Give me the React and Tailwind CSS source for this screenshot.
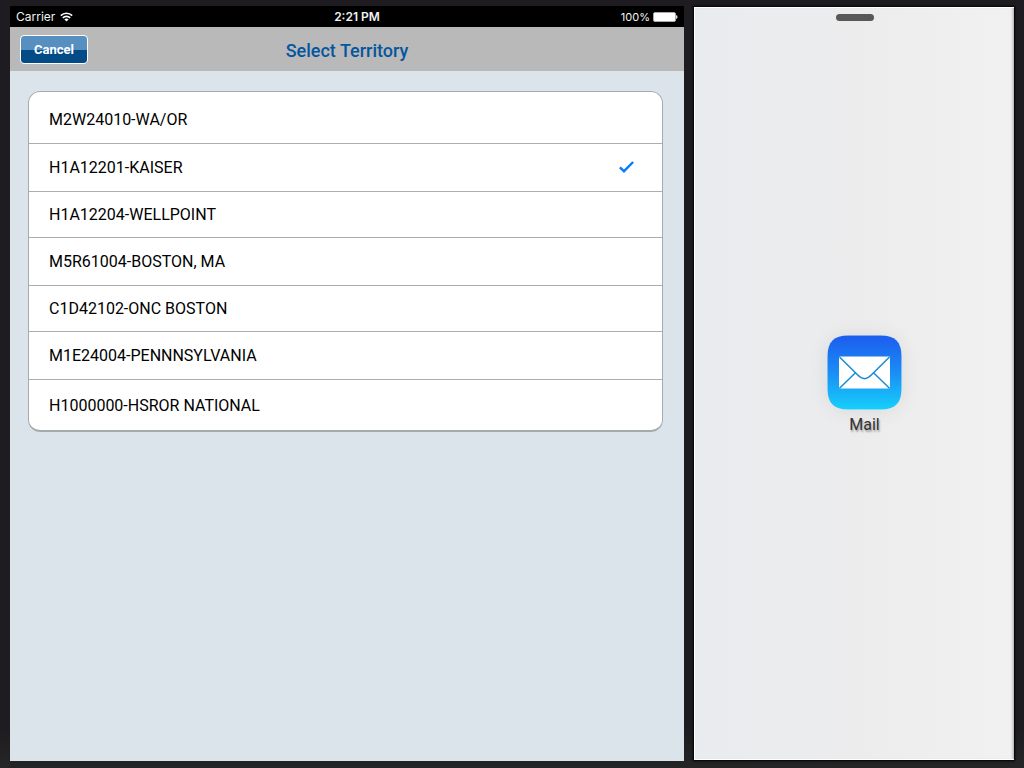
import { useState } from "react";

const territories = [
  { name: "M2W24010-WA/OR", row: "h-[52px] pt-[4px]" },
  { name: "H1A12201-KAISER", row: "h-[48px] pt-px" },
  { name: "H1A12204-WELLPOINT", row: "h-[46px] pt-px" },
  { name: "M5R61004-BOSTON, MA", row: "h-[48px] pt-px" },
  { name: "C1D42102-ONC BOSTON", row: "h-[46px] pt-px" },
  { name: "M1E24004-PENNNSYLVANIA", row: "h-[48px] pt-px" },
  { name: "H1000000-HSROR NATIONAL", row: "h-[50px] pt-px" },
];

function StatusBar() {
  return (
    <div className="grid h-[21px] grid-cols-3 items-center bg-black px-[6px] font-['Inter',sans-serif] text-[12px] leading-[14px] text-[#f2f2f2]">
      <div className="flex items-center gap-[5px]">
        <span>Carrier</span>
        <svg className="h-[10px] w-[13px]" viewBox="0 0 13 10" fill="none" stroke="#fff" strokeWidth="1.6" aria-hidden="true">
          <path d="M0.8 3.6a8.2 8.2 0 0 1 11.4 0M2.8 5.9a5.3 5.3 0 0 1 7.4 0" />
          <path d="M6.5 9.6 4.4 7.5a3 3 0 0 1 4.2 0z" fill="#fff" stroke="none" />
        </svg>
      </div>
      <span className="pl-[20px] text-center font-semibold">2:21 PM</span>
      <div className="flex items-center justify-end gap-[3px]">
        <span className="text-[11px]">100%</span>
        <svg className="h-[10px] w-[25px]" viewBox="0 0 25 10" aria-hidden="true">
          <rect x="0.5" y="0.5" width="22" height="9" rx="1.5" fill="#fff" stroke="#aaa" />
          <rect x="1.5" y="1.5" width="20" height="7" fill="#fff" />
          <path d="M23 3v4q1.600-.6 1.600-2t-1.600-2z" fill="#ddd" />
        </svg>
      </div>
    </div>
  );
}

function TerritoryList() {
  const [selected, setSelected] = useState("H1A12201-KAISER");
  return (
    <fieldset aria-label="Territory" className="overflow-hidden rounded-[12px] border border-b-2 border-[#a5abad] bg-white">
      {territories.map(({ name, row }) => (
        <label
          key={name}
          className={`${row} relative flex cursor-pointer items-center justify-between border-b border-[#abaeb0] pr-[28px] pl-[20px] text-[16px] leading-[20px] text-black last:border-b-0`}
        >
          <span>{name}</span>
          <input
            type="radio"
            name="territory"
            className="peer sr-only"
            checked={selected === name}
            onChange={() => setSelected(name)}
          />
          <svg className="hidden h-[14px] w-[15px] peer-checked:block" viewBox="0 0 15 14" fill="none" stroke="#087cff" strokeWidth="2.4" aria-hidden="true">
            <path d="M0.900 6.300 5 10.200 14.100 1" />
          </svg>
        </label>
      ))}
    </fieldset>
  );
}

function MailIcon() {
  return (
    <svg className="h-[75px] w-[75px]" viewBox="0 0 75 75" fill="none" aria-hidden="true">
      <defs>
        <linearGradient id="mail-sky" x1="0" y1="0" x2="0" y2="1">
          <stop offset="0" stopColor="#1d5cef" />
          <stop offset="0.5" stopColor="#1a8df5" />
          <stop offset="1" stopColor="#16d0fb" />
        </linearGradient>
      </defs>
      <path d="M21 0.500H54C68 0.500 74.500 7 74.500 21V54C74.500 68 68 74.500 54 74.500H21C7 74.500 0.500 68 0.500 54V21C0.500 7 7 0.500 21 0.500Z" fill="url(#mail-sky)" />
      <rect x="12" y="21.500" width="51" height="32" rx="1" fill="#fff" />
      <g stroke="#188bdd" strokeWidth="1.500">
        <path d="M12.500 22 30.500 39.800Q37.500 47.500 44.500 39.800L62.500 22" />
        <path d="M12.500 53.200 28.500 37.800M62.500 53.200 46.500 37.800" />
      </g>
    </svg>
  );
}

export default function App() {
  return (
    <div className="grid min-h-screen grid-cols-[674fr_320fr] gap-[10px] bg-[#1b1a1e] bg-linear-to-b from-[#1e1c20] from-95% to-[#252526] px-[10px] pt-[6px] pb-[7px] font-['Roboto',sans-serif]">
      <main className="flex min-w-0 flex-col bg-[#dce4eb]">
        <StatusBar />
        <header className="grid h-[44px] grid-cols-[1fr_auto_1fr] items-center bg-[#b9b9b9] px-[10px]">
          <button
            type="button"
            className="h-[29px] w-[68px] rounded-[4px] border border-white bg-linear-to-b from-[#5790c0] from-50% to-[#034b87] to-50% pt-px text-[13px] leading-[16px] font-bold text-white"
          >
            Cancel
          </button>
          <h1 className="pt-[3px] text-[18px] leading-[24px] font-medium text-[#05569f]">Select Territory</h1>
        </header>
        <div className="pt-[20px] pr-[21px] pl-[18px]">
          <TerritoryList />
        </div>
      </main>
      <aside className="my-px flex min-w-0 flex-col items-center border-y border-l border-white bg-linear-to-r from-[#e9ecef] via-[#ececed] to-[#f1f1f1] pt-[6px] shadow-[0_0_2px_1px_#000,inset_-3px_0_3px_-2px_#a3a3a3]">
        <div className="h-[7px] w-[38px] rounded-full bg-[#585858]" />
        <div className="flex w-full flex-1 items-center justify-center pb-[10px] pl-[20px]">
          <a href="#mail" className="flex flex-col items-center gap-[5px] text-[16px] leading-[20px] text-[#333]">
            <span className="rounded-[20px] shadow-[0_1px_20px_rgba(0,0,0,0.08)]">
              <MailIcon />
            </span>
            <span className="[text-shadow:1px_2px_2px_rgba(0,0,0,0.35)]">Mail</span>
          </a>
        </div>
      </aside>
    </div>
  );
}
